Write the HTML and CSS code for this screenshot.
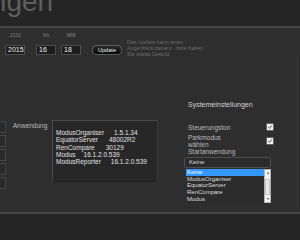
FILE: index.html
```html
<!DOCTYPE html>
<html lang="de">
<head>
<meta charset="utf-8">
<link rel="stylesheet" href="styles.css">
</head>
<body>
<header class="top"><h1 class="title">Einstellungen</h1></header>
<main class="main">
  <section class="date-row">
    <div class="field f-year"><span class="lbl">JJJJ</span><div class="box">2015</div></div>
    <div class="field f-hour"><span class="lbl">hh</span><div class="box">16</div></div>
    <div class="field f-min"><span class="lbl">MM</span><div class="box">18</div></div>
    <button class="update">Update</button>
    <p class="note">Das Update kann einen<br>Augenblick dauern - bitte haben<br>Sie etwas Geduld.</p>
  </section>
  <section class="content">
    <div class="tabs">
      <div class="tab"></div><div class="tab"></div><div class="tab"></div><div class="tab"></div><div class="tab"></div>
    </div>
    <div class="app-label">Anwendung</div>
    <div class="versions">
      <div class="ver"><span>ModusOrganiser</span><span class="v g10">1.5.1.34</span></div>
      <div class="ver"><span>EquatorServer</span><span class="v g11">48002R2</span></div>
      <div class="ver"><span>RenCompare</span><span class="v g11">30129</span></div>
      <div class="ver"><span>Modus</span><span class="v g8">16.1.2.0.539</span></div>
      <div class="ver"><span>ModusReporter</span><span class="v g10">16.1.2.0.539</span></div>
    </div>
    <div class="system">
      <h2 class="sys-title">Systemeinstellungen</h2>
      <div class="row r1"><span class="row-lbl">Steuerungston</span><span class="check"><svg viewBox="0 0 6 6" width="6" height="6"><path d="M1.2 3.1 L2.5 4.4 L4.9 1.4" fill="none" stroke="#333" stroke-width="0.9"/></svg></span></div>
      <div class="row r2"><span class="row-lbl">Parkmodus wählen</span><span class="check"><svg viewBox="0 0 6 6" width="6" height="6"><path d="M1.2 3.1 L2.5 4.4 L4.9 1.4" fill="none" stroke="#333" stroke-width="0.9"/></svg></span></div>
      <div class="start-lbl">Startanwendung</div>
      <div class="select">Keine</div>
      <div class="list">
        <div class="items">
          <div class="item sel">Keine</div>
          <div class="item">ModusOrganiser</div>
          <div class="item">EquatorServer</div>
          <div class="item">RenCompare</div>
          <div class="item">Modus</div>
        </div>
        <div class="scroll">
          <span class="arrow up"></span>
          <span class="thumb"></span>
          <span class="arrow down"></span>
        </div>
      </div>
    </div>
  </section>
</main>
<footer class="bottom"></footer>
</body>
</html>
```

FILE: styles.css
```css
html, body {
  margin: 0;
  padding: 0;
}
body {
  width: 300px;
  height: 240px;
  overflow: hidden;
  background: #2e2e2e;
  font-family: "Liberation Sans", Arial, sans-serif;
  color: #ddd;
}
.top {
  height: 26px;
  background: #252525;
  overflow: hidden;
  border-bottom: 2px solid #434343;
}
.title {
  margin: -12px 0 0 -115px;
  font-size: 28px;
  line-height: 28px;
  font-weight: normal;
  color: #5f5f5f;
  white-space: nowrap;
}
.main {
  height: 184px;
  overflow: hidden;
}
.date-row {
  display: flex;
  align-items: flex-start;
  padding: 4px 0 0 5px;
  height: 23px;
}
.field {
  display: flex;
  flex-direction: column;
  align-items: center;
  width: 20px;
}
.f-hour { margin-left: 11px; }
.f-min { margin-left: 5px; }
.lbl {
  font-size: 5.5px;
  line-height: 6px;
  height: 6px;
  color: #858585;
  margin-bottom: 7px;
}
.box {
  box-sizing: border-box;
  width: 20px;
  height: 10px;
  border: 1px solid #4c4c4c;
  background: #1d1d1d;
  color: #eee;
  font-size: 7px;
  line-height: 8px;
  padding-left: 2px;
  align-self: stretch;
}
.update {
  margin: 13px 0 0 11px;
  box-sizing: border-box;
  width: 30px;
  height: 10px;
  padding: 0;
  border: 1px solid #5c5c5c;
  border-radius: 4px;
  background: linear-gradient(#2a2a2a, #050505);
  color: #eee;
  font-family: "Liberation Sans", Arial, sans-serif;
  font-size: 5.6px;
  line-height: 8px;
}
.note {
  margin: 7px 0 0 5px;
  font-size: 5.4px;
  line-height: 6px;
  color: #6c6c6c;
  white-space: nowrap;
}
.content {
  display: flex;
  align-items: flex-start;
  width: 297px;
  height: 153px;
  border-right: 1px solid #3a3a3a;
}
.tabs {
  margin-top: 66px;
  width: 6px;
  display: flex;
  flex-direction: column;
  gap: 2px;
}
.tab {
  height: 12px;
  box-sizing: border-box;
  border: 1px solid #464646;
  border-left: none;
  background: #2a2a2a;
}
.app-label {
  margin: 67px 0 0 7px;
  width: 39px;
  font-size: 6.5px;
  line-height: 7px;
  color: #bdbdbd;
}
.versions {
  margin-top: 65px;
  box-sizing: border-box;
  width: 106px;
  height: 62px;
  border: 1px solid #4a4a4a;
  border-bottom-color: #202020;
  border-right-color: #3a3a3a;
  background: #272727;
  padding: 8px 0 0 3px;
}
.ver {
  display: flex;
  font-size: 6.5px;
  line-height: 7.3px;
  color: #e2e2e2;
  white-space: nowrap;
}
.g8 { margin-left: 8px; }
.g10 { margin-left: 10px; }
.g11 { margin-left: 11px; }
.system {
  margin: 46px 0 0 28px;
  width: 88px;
}
.sys-title {
  margin: 0 0 0 2px;
  font-size: 7px;
  line-height: 8px;
  font-weight: normal;
  color: #d2d2d2;
  white-space: nowrap;
}
.row {
  display: flex;
  align-items: center;
  padding-left: 2px;
}
.r1 { margin-top: 14.5px; }
.r2 { margin-top: 3px; }
.row-lbl {
  width: 45px;
  font-size: 6.5px;
  line-height: 7px;
  color: #bbb;
}
.check {
  margin-left: auto;
  margin-right: 1px;
  width: 6px;
  height: 6px;
  background: #f2f2f2;
  box-shadow: 0 0 0 0.5px #9a9a9a;
  display: flex;
}
.start-lbl {
  padding-left: 2px;
  font-size: 6.5px;
  line-height: 7px;
  color: #bbb;
}
.select {
  margin: 2.5px 3px 0 -2px;
  box-sizing: border-box;
  height: 11px;
  border: 1px solid #4e4e4e;
  border-radius: 2px;
  background: #2b2b2b;
  font-size: 6px;
  line-height: 9px;
  padding-left: 4px;
  color: #ddd;
}
.list {
  margin: 1px 3px 0 0;
  height: 34px;
  display: flex;
  overflow: hidden;
  background: #2c2c2c;
}
.items {
  flex: 1;
}
.item {
  height: 6.7px;
  font-size: 6px;
  line-height: 6.7px;
  padding-left: 1px;
  color: #dcdcdc;
  white-space: nowrap;
}
.item.sel {
  background: #3399ff;
  color: #fff;
}
.scroll {
  width: 7px;
  box-sizing: border-box;
  background: #f3f3f3;
  border: 1px solid #b5b5b5;
  display: flex;
  flex-direction: column;
  align-items: center;
}
.arrow {
  width: 0;
  height: 0;
  border-left: 1.5px solid transparent;
  border-right: 1.5px solid transparent;
}
.arrow.up {
  margin-top: 2px;
  border-bottom: 2px solid #444;
}
.arrow.down {
  margin-top: auto;
  margin-bottom: 2px;
  border-top: 2px solid #444;
}
.thumb {
  margin-top: 5px;
  width: 3px;
  height: 14px;
  border: 1px solid #c4c4c4;
  background: #e9e9e9;
}
.bottom {
  height: 26px;
  background: #252525;
  border-top: 2px solid #434343;
}
```
